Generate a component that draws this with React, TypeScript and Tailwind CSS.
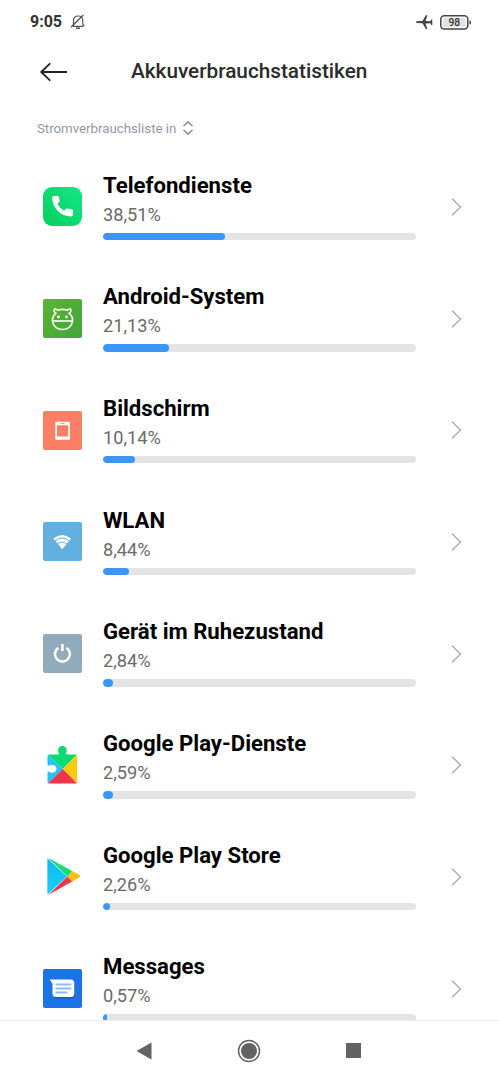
import type { ReactNode } from "react";

type Consumer = {
  name: string;
  percent: string;
  fill: number; // px of the bar that is filled
  icon: ReactNode;
};

function PhoneIcon() {
  return (
    <svg viewBox="0 0 39 39" className="size-full">
      <defs>
        <linearGradient id="phone" x1="0" y1="1" x2="1" y2="0">
          <stop offset="0" stopColor="#08cf5d" />
          <stop offset="1" stopColor="#14e688" />
        </linearGradient>
      </defs>
      <rect width="39" height="39" rx="9" fill="url(#phone)" />
      <path
        d="M11 9h3.600q1.200 0 1.400 1.200l.6 3.700q.1 1-.7 1.600l-1.500 1.200q2.200 4.700 6.800 7l1.400-1.600q.7-.8 1.700-.6l4.600.8q1.100.2 1.100 1.300v4q0 1.800-1.800 1.800C17.500 29.400 9.400 21 9.200 10.800Q9.200 9 11 9z"
        fill="#fff"
      />
    </svg>
  );
}

function AndroidIcon() {
  return (
    <svg viewBox="0 0 39 39" className="size-full">
      <defs>
        <linearGradient id="android" x1="0" y1="0" x2="1" y2="1">
          <stop offset="0" stopColor="#5bb531" />
          <stop offset="1" stopColor="#3fa53d" />
        </linearGradient>
      </defs>
      <rect width="39" height="39" rx="2" fill="url(#android)" />
      <g fill="none" stroke="#f2fbe9" strokeWidth="1.700">
        <path d="M12.800 14.300C9.500 11.500 11.500 8 14.800 11.300Q19.500 9.600 24.300 11.300C27.600 8 29.500 11.500 26.200 14.300Q30 17.500 29.500 22C29 27.500 24.500 30.500 19.500 30.500S10 27.500 9.500 22Q9.100 17.500 12.800 14.300z" />
        <path d="M9.600 22h19.900" />
      </g>
      <circle cx="15.500" cy="18" r="1.400" fill="#f2fbe9" />
      <circle cx="23.500" cy="18" r="1.400" fill="#f2fbe9" />
    </svg>
  );
}

function ScreenIcon() {
  return (
    <svg viewBox="0 0 39 39" className="size-full">
      <rect width="39" height="39" rx="2" fill="#fa7f65" />
      <path
        fillRule="evenodd"
        d="M13.300 10.700h12.600q1 0 1 1v16q0 1-1 1H13.300q-1 0-1-1v-16q0-1 1-1zM14 14.200v11.300h11.200V14.200zM17.300 12v.8h4.400V12z"
        fill="#fff"
      />
    </svg>
  );
}

function WifiIcon() {
  return (
    <svg viewBox="0 0 39 39" className="size-full">
      <rect width="39" height="39" rx="2" fill="#62b0e0" />
      <path d="M19.200 27.200l-8.900-10.600Q19.200 9.200 28.100 16.600z" fill="#fff" />
      <g fill="none" stroke="#62b0e0" strokeWidth="1">
        <path d="M12 18.900q7.200-5.700 14.400 0" />
        <path d="M14.300 22q4.900-3.700 9.800 0" />
      </g>
    </svg>
  );
}

function PowerIcon() {
  return (
    <svg viewBox="0 0 39 39" className="size-full">
      <rect width="39" height="39" rx="2" fill="#92abbc" />
      <g fill="none" stroke="#fff" strokeWidth="2.600">
        <path d="M15.300 13.800a7.500 7.500 0 1 0 8.200 0" />
        <path d="M19.400 10v7" />
      </g>
    </svg>
  );
}

function PlayServicesIcon() {
  return (
    <svg viewBox="0 0 39 39" className="size-full">
      <defs>
        <clipPath id="puzzle">
          <path d="M6 8.600h8.500q1.500 0 1.300-1.500C14.500 5.800 14.700.1 19.400.1s5 5.700 3.600 7q-.1 1.500 1.300 1.500H32.600q1.500 0 1.500 1.500v26q0 1.500-1.500 1.500H6q-1.500 0-1.500-1.500V27q0-1.300 1.400-1.200c2.500 1.800 7.600 1.200 7.600-3s-5-4.800-7.600-3q-1.400.1-1.400-1.200V10.100q0-1.500 1.500-1.500z" />
        </clipPath>
      </defs>
      <g clipPath="url(#puzzle)">
        <path d="M4.500 8.600V0h29.600v8.600L19.800 23z" fill="#0dda73" />
        <path d="M4 8.100v30L19.800 23z" fill="#20c4f8" />
        <path d="M34.600 8.100v30L19.800 23z" fill="#fdca0b" />
        <path d="M4 38.100h30.600L19.800 23z" fill="#ee354b" />
      </g>
    </svg>
  );
}

function PlayStoreIcon() {
  return (
    <svg viewBox="0 0 39 39" className="size-full">
      <defs>
        <linearGradient id="store" x1="0" y1="1" x2="0" y2="0">
          <stop offset="0" stopColor="#13d5f7" />
          <stop offset="1" stopColor="#12b4f1" />
        </linearGradient>
        <clipPath id="triangle">
          <path d="M6.400 1.400L36.300 18q2 1.200 0 2.400L6.400 37.300q-2 .9-2-1.200V2.600q0-2.100 2-1.200z" />
        </clipPath>
      </defs>
      <g clipPath="url(#triangle)">
        <path d="M3 0v39l21-19.500z" fill="url(#store)" />
        <path d="M3-1l21.500 20.500L31 13z" fill="#11df76" />
        <path d="M3 40l21.500-20.500L31 26z" fill="#ed3448" />
        <path d="M30 12.800L24.200 19.400l6 6.700L40 19.400z" fill="#fbbf16" />
      </g>
    </svg>
  );
}

function MessagesIcon() {
  return (
    <svg viewBox="0 0 39 39" className="size-full">
      <rect width="39" height="39" rx="2" fill="#1b73e8" />
      <path
        d="M7.800 12.500l3 4V26q0 4 4 4h13q4 0 4-4V15z"
        fill="#0d55b5"
        opacity=".6"
      />
      <path d="M6.800 10.600h21q3.500 0 3.500 3.500v10.500q0 3.500-3.500 3.500H13q-3.500 0-3.500-3.500V15z" fill="#fff" />
      <path
        d="M13.300 15.500h14.200M13.300 19.500h14.200M13.300 23.500h10.400"
        fill="none"
        stroke="#8bbaf7"
        strokeWidth="1.900"
        strokeLinecap="round"
      />
    </svg>
  );
}

const consumers: Consumer[] = [
  { name: "Telefondienste", percent: "38,51%", fill: 122, icon: <PhoneIcon /> },
  { name: "Android-System", percent: "21,13%", fill: 66, icon: <AndroidIcon /> },
  { name: "Bildschirm", percent: "10,14%", fill: 31.5, icon: <ScreenIcon /> },
  { name: "WLAN", percent: "8,44%", fill: 25.5, icon: <WifiIcon /> },
  { name: "Gerät im Ruhezustand", percent: "2,84%", fill: 9.5, icon: <PowerIcon /> },
  { name: "Google Play-Dienste", percent: "2,59%", fill: 9.5, icon: <PlayServicesIcon /> },
  { name: "Google Play Store", percent: "2,26%", fill: 6.5, icon: <PlayStoreIcon /> },
  { name: "Messages", percent: "0,57%", fill: 3.5, icon: <MessagesIcon /> },
];

function StatusBar() {
  return (
    <div className="flex h-11 shrink-0 items-center pl-[30px] pr-[27px] text-[#333]">
      <span className="text-[16px] font-bold leading-none">9:05</span>
      <svg viewBox="0 0 16 16" className="ml-2 size-4" fill="none" stroke="#555" strokeWidth="1.200">
        <path d="M3 12.300h10.500M3.500 12V7.200C3.500 4 5.500 2 8.200 2s4.600 2 4.600 5v3.200l1.300 2" />
        <path d="M1 13.300L13.300 1" strokeWidth="1.400" />
        <path d="M6 14.200h4" strokeWidth="1.600" />
      </svg>
      <svg viewBox="0 0 17 16" className="ml-auto h-4 w-[17px]" fill="#444">
        <path d="M.5 7.300L6.500 7 9.800 1.300h1.600L9.600 7l4.800.2.900-1.700h1v5.400h-1l-.9-1.700-4.800.2 1.800 5.500H9.800L6.500 9.200.5 8.900q-.8-.8 0-1.600z" />
      </svg>
      <svg viewBox="0 0 32 15" className="ml-[7px] h-[15px] w-8">
        <rect x=".8" y=".8" width="27" height="13.200" rx="3.500" fill="#fff" stroke="#444" strokeWidth="1.500" />
        <rect x="2.700" y="2.700" width="23" height="9.400" rx="1.500" fill="#e2e2e2" />
        <path d="M30.200 5.700v3.600" stroke="#444" strokeWidth="1.500" />
        <text x="14.300" y="11.100" textAnchor="middle" fontSize="10.300" fontWeight="500" fill="#333">
          98
        </text>
      </svg>
    </div>
  );
}

function Header() {
  return (
    <header className="flex h-14 shrink-0 items-center pl-10">
      <svg viewBox="0 0 28 20" className="h-5 w-7" fill="none" stroke="#222" strokeWidth="1.800" strokeLinecap="round" strokeLinejoin="round">
        <path d="M26.300 10H1.200M9.700 1.800L1.200 10l8.500 8.200" />
      </svg>
      <h1 className="ml-[63px] pb-0.5 text-[20.750px] font-medium leading-none text-[#2b2b2b]">
        Akkuverbrauchstatistiken
      </h1>
    </header>
  );
}

function ConsumerRow({ name, percent, fill, icon }: Consumer) {
  return (
    <li className="flex h-[111.700px] shrink-0 items-center pl-[43px] pr-[37px]">
      <div className="size-[39px] shrink-0">{icon}</div>
      <div className="ml-[21px] w-[313px] shrink-0 pb-1">
        <div className="whitespace-nowrap text-[22.150px] font-bold leading-[30px] text-black">{name}</div>
        <div className="text-[18.200px] leading-[29px] text-[#6a6a6a]">{percent}</div>
        <div className="mt-1 h-[7.500px] overflow-hidden rounded-full bg-[#e4e4e4]">
          <div className="h-full rounded-full bg-[#3b96f7]" style={{ width: fill }} />
        </div>
      </div>
      <svg viewBox="0 0 11 18" className="ml-auto h-[18px] w-[11px]" fill="none" stroke="#aaa" strokeWidth="1.300">
        <path d="M1 .8L9.600 9 1 17.200" />
      </svg>
    </li>
  );
}

function NavBar() {
  return (
    <nav className="flex h-[60px] shrink-0 items-center justify-between border-t border-[#ececec] bg-white pl-[136px] pr-[138px]">
      <svg viewBox="0 0 16 18" className="h-[18px] w-4" fill="#636363">
        <path d="M.5 9L15.500.5v17z" />
      </svg>
      <svg viewBox="0 0 24 24" className="size-6">
        <circle cx="12" cy="12" r="10.500" fill="none" stroke="#636363" strokeWidth="1.500" />
        <circle cx="12" cy="12" r="8" fill="#636363" />
      </svg>
      <div className="size-[15px] bg-[#636363]" />
    </nav>
  );
}

export default function App() {
  return (
    <div className="flex h-[1080px] w-[499px] flex-col overflow-hidden bg-white font-['Roboto',sans-serif]">
      <StatusBar />
      <Header />
      <div className="flex h-[51px] shrink-0 items-start pl-[37px] pt-[21px] text-[#9497ab]">
        <span className="text-[13.250px] leading-[15px]">Stromverbrauchsliste in</span>
        <svg viewBox="0 0 12 14" className="ml-1.5 h-[14px] w-3" fill="none" stroke="#85899c" strokeWidth="1.600">
          <path d="M1.500 5L6 1l4.500 4M1.500 9L6 13l4.500-4" />
        </svg>
      </div>
      <ul className="flex min-h-0 flex-1 flex-col overflow-hidden">
        {consumers.map((c) => (
          <ConsumerRow key={c.name} {...c} />
        ))}
      </ul>
      <NavBar />
    </div>
  );
}
